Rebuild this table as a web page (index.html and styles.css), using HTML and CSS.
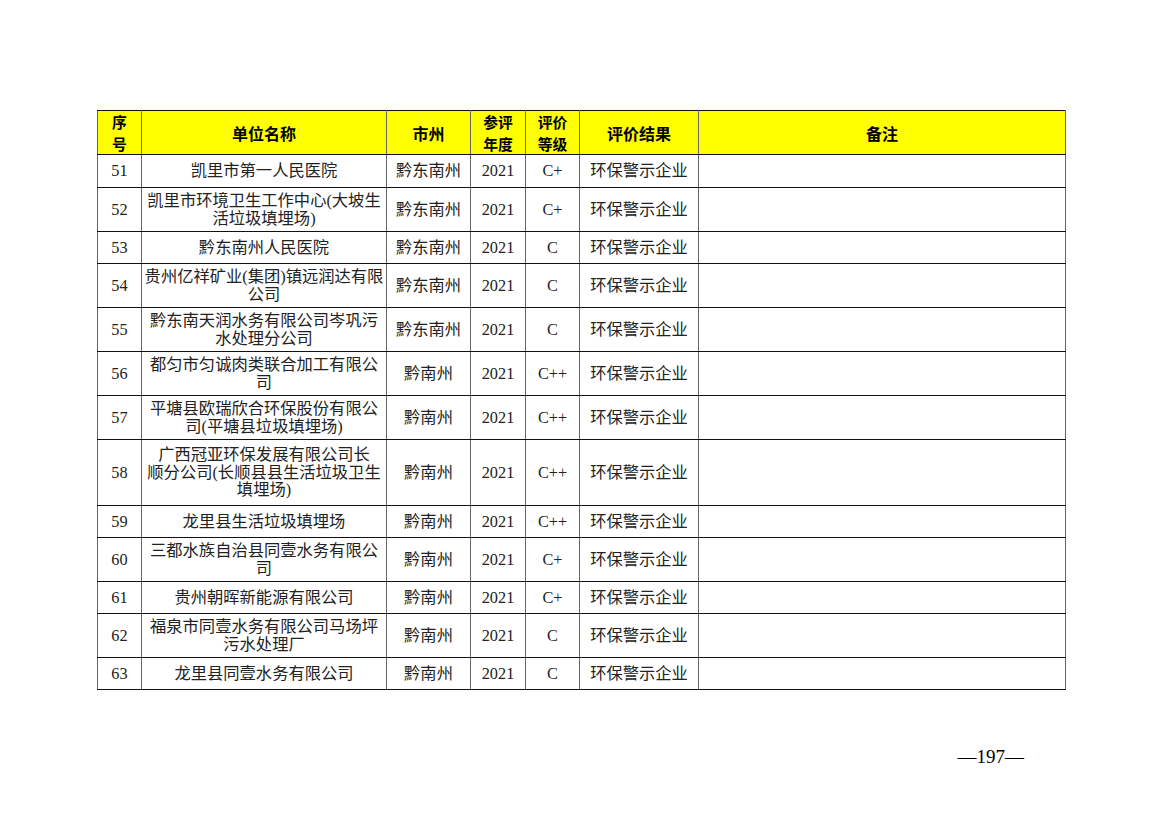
FILE: index.html
```html
<!DOCTYPE html>
<html lang="zh-CN">
<head>
<meta charset="utf-8">
<title>评价结果</title>
<link rel="stylesheet" href="styles.css">
</head>
<body>
<div class="page">
  <table class="grid">
    <colgroup>
      <col class="c-no"><col class="c-name"><col class="c-city"><col class="c-year"><col class="c-grade"><col class="c-result"><col class="c-note">
    </colgroup>
    <thead>
      <tr class="h44">
        <th class="two">序<br>号</th>
        <th>单位名称</th>
        <th>市州</th>
        <th class="two">参评<br>年度</th>
        <th class="two">评价<br>等级</th>
        <th>评价结果</th>
        <th>备注</th>
      </tr>
    </thead>
    <tbody>
      <tr class="h33"><td>51</td><td>凯里市第一人民医院</td><td>黔东南州</td><td>2021</td><td>C+</td><td>环保警示企业</td><td></td></tr>
      <tr class="h44"><td>52</td><td>凯里市环境卫生工作中心(大坡生<br>活垃圾填埋场)</td><td>黔东南州</td><td>2021</td><td>C+</td><td>环保警示企业</td><td></td></tr>
      <tr class="h32"><td>53</td><td>黔东南州人民医院</td><td>黔东南州</td><td>2021</td><td>C</td><td>环保警示企业</td><td></td></tr>
      <tr class="h44"><td>54</td><td>贵州亿祥矿业(集团)镇远润达有限<br>公司</td><td>黔东南州</td><td>2021</td><td>C</td><td>环保警示企业</td><td></td></tr>
      <tr class="h44"><td>55</td><td>黔东南天润水务有限公司岑巩污<br>水处理分公司</td><td>黔东南州</td><td>2021</td><td>C</td><td>环保警示企业</td><td></td></tr>
      <tr class="h44"><td>56</td><td>都匀市匀诚肉类联合加工有限公<br>司</td><td>黔南州</td><td>2021</td><td>C++</td><td>环保警示企业</td><td></td></tr>
      <tr class="h44"><td>57</td><td>平塘县欧瑞欣合环保股份有限公<br>司(平塘县垃圾填埋场)</td><td>黔南州</td><td>2021</td><td>C++</td><td>环保警示企业</td><td></td></tr>
      <tr class="h66"><td>58</td><td>广西冠亚环保发展有限公司长<br>顺分公司(长顺县县生活垃圾卫生<br>填埋场)</td><td>黔南州</td><td>2021</td><td>C++</td><td>环保警示企业</td><td></td></tr>
      <tr class="h32"><td>59</td><td>龙里县生活垃圾填埋场</td><td>黔南州</td><td>2021</td><td>C++</td><td>环保警示企业</td><td></td></tr>
      <tr class="h44"><td>60</td><td>三都水族自治县同壹水务有限公<br>司</td><td>黔南州</td><td>2021</td><td>C+</td><td>环保警示企业</td><td></td></tr>
      <tr class="h32"><td>61</td><td>贵州朝晖新能源有限公司</td><td>黔南州</td><td>2021</td><td>C+</td><td>环保警示企业</td><td></td></tr>
      <tr class="h44"><td>62</td><td>福泉市同壹水务有限公司马场坪<br>污水处理厂</td><td>黔南州</td><td>2021</td><td>C</td><td>环保警示企业</td><td></td></tr>
      <tr class="h32"><td>63</td><td>龙里县同壹水务有限公司</td><td>黔南州</td><td>2021</td><td>C</td><td>环保警示企业</td><td></td></tr>
    </tbody>
  </table>
  <div class="footer"><span class="pageno">—197—</span></div>
</div>
</body>
</html>
```
FILE: styles.css
```css
html, body {
  margin: 0;
  padding: 0;
  background: #ffffff;
}
.page {
  width: 1169px;
  height: 826px;
  box-sizing: border-box;
  padding: 110px 0 0 97px;
  overflow: hidden;
}
.grid {
  table-layout: fixed;
  border-collapse: collapse;
  width: 968px;
  border: 1.5px solid #111;
}
.c-no { width: 44px; }
.c-name { width: 245px; }
.c-city { width: 84px; }
.c-year { width: 55px; }
.c-grade { width: 54px; }
.c-result { width: 119px; }
.c-note { width: 367px; }

.grid th, .grid td {
  padding: 0;
  text-align: center;
  vertical-align: middle;
  white-space: nowrap;
  border-top: 1px solid #111;
  border-bottom: 1px solid #111;
  border-left: 1px solid #666;
  border-right: 1px solid #666;
  box-sizing: border-box;
}
.grid th {
  background: #ffff00;
  font-family: "Noto Sans CJK SC", "Liberation Sans", sans-serif;
  font-weight: 700;
  font-size: 16px;
  line-height: 20px;
  color: #000;
}
.grid th.two {
  font-size: 14.8px;
  line-height: 21.5px;
}
.grid td {
  font-family: "Liberation Serif", "Noto Sans CJK SC", serif;
  font-weight: 400;
  font-size: 16.3px;
  line-height: 17.5px;
  color: #222;
}
.h33 { height: 33px; }
.h32 { height: 32px; }
.h44 { height: 44px; }
.h66 { height: 66px; }

.footer {
  display: flex;
  justify-content: flex-end;
  width: 927px;
  margin-top: 56px;
}
.pageno {
  font-family: "Liberation Serif", serif;
  font-size: 19px;
  color: #000;
}
```
